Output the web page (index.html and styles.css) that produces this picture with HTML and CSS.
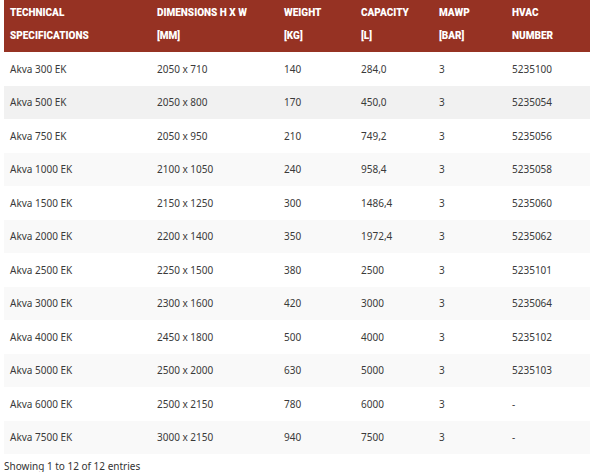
FILE: index.html
```html
<!DOCTYPE html>
<html>
<head>
<meta charset="utf-8">
<link rel="stylesheet" href="styles.css">
</head>
<body>
<div class="wrap">
<table class="specs">
<colgroup>
<col class="c1"><col class="c2"><col class="c3"><col class="c4"><col class="c5"><col class="c6">
</colgroup>
<thead>
<tr>
<th>TECHNICAL<br>SPECIFICATIONS</th>
<th>DIMENSIONS H X W<br>[MM]</th>
<th>WEIGHT<br>[KG]</th>
<th>CAPACITY<br>[L]</th>
<th>MAWP<br>[BAR]</th>
<th>HVAC<br>NUMBER</th>
</tr>
</thead>
<tbody>
<tr><td>Akva 300 EK</td><td>2050 x 710</td><td>140</td><td>284,0</td><td>3</td><td>5235100</td></tr>
<tr class="hover"><td>Akva 500 EK</td><td>2050 x 800</td><td>170</td><td>450,0</td><td>3</td><td>5235054</td></tr>
<tr><td>Akva 750 EK</td><td>2050 x 950</td><td>210</td><td>749,2</td><td>3</td><td>5235056</td></tr>
<tr><td>Akva 1000 EK</td><td>2100 x 1050</td><td>240</td><td>958,4</td><td>3</td><td>5235058</td></tr>
<tr><td>Akva 1500 EK</td><td>2150 x 1250</td><td>300</td><td>1486,4</td><td>3</td><td>5235060</td></tr>
<tr><td>Akva 2000 EK</td><td>2200 x 1400</td><td>350</td><td>1972,4</td><td>3</td><td>5235062</td></tr>
<tr><td>Akva 2500 EK</td><td>2250 x 1500</td><td>380</td><td>2500</td><td>3</td><td>5235101</td></tr>
<tr><td>Akva 3000 EK</td><td>2300 x 1600</td><td>420</td><td>3000</td><td>3</td><td>5235064</td></tr>
<tr><td>Akva 4000 EK</td><td>2450 x 1800</td><td>500</td><td>4000</td><td>3</td><td>5235102</td></tr>
<tr><td>Akva 5000 EK</td><td>2500 x 2000</td><td>630</td><td>5000</td><td>3</td><td>5235103</td></tr>
<tr><td>Akva 6000 EK</td><td>2500 x 2150</td><td>780</td><td>6000</td><td>3</td><td>-</td></tr>
<tr><td>Akva 7500 EK</td><td>3000 x 2150</td><td>940</td><td>7500</td><td>3</td><td>-</td></tr>
</tbody>
</table>
<div class="info">Showing 1 to 12 of 12 entries</div>
</div>
</body>
</html>
```
FILE: styles.css
```css
html, body {
  margin: 0;
  padding: 0;
  background: #ffffff;
}
body {
  font-family: "Noto Sans", "Open Sans", sans-serif;
  color: #3a3a3a;
}
.wrap {
  padding-left: 4px;
  width: 586px;
}
.specs {
  width: 586px;
  border-collapse: collapse;
  table-layout: fixed;
  font-size: 10px;
}
.c1 { width: 147px; }
.c2 { width: 127px; }
.c3 { width: 77px; }
.c4 { width: 78px; }
.c5 { width: 73px; }
.c6 { width: 84px; }
.specs th {
  background: #963223;
  color: #ffffff;
  text-align: left;
  font-family: "Roboto", sans-serif;
  font-weight: 900;
  font-size: 10px;
  line-height: 23px;
  padding: 1px 6px 5px 6px;
  height: 46px;
  vertical-align: top;
}
.specs td {
  padding: 0 6px;
  height: 33.5px;
  vertical-align: middle;
  line-height: 14px;
}
.specs tbody tr:nth-child(even) td {
  background: #f9f9f9;
}
.specs tbody tr.hover td {
  background: #f1f1f1;
}
.info {
  font-size: 10px;
  color: #333333;
  padding-top: 5px;
  line-height: 14px;
}
```
